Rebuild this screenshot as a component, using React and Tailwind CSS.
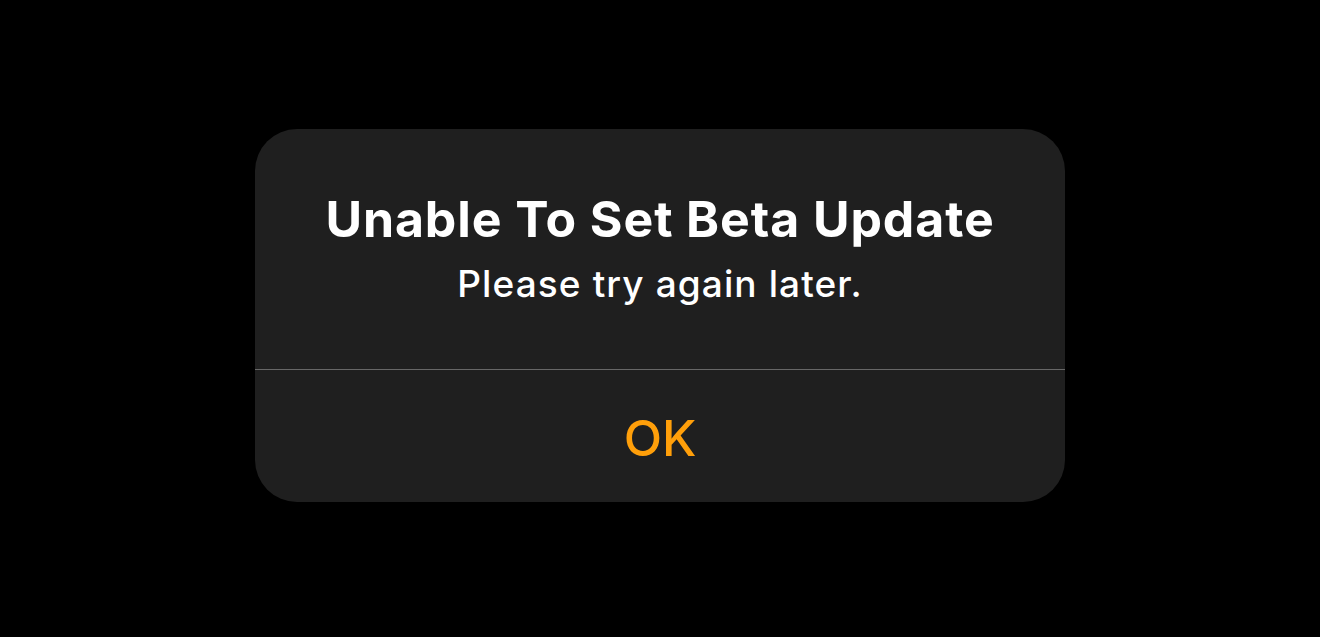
export default function App() {
  return (
    <div className="w-[1320px] h-[637px] bg-black pt-[129px]" style={{ fontFamily: "Inter, 'Noto Sans', sans-serif" }}>
      <div className="mx-auto w-[810px] h-[373px] rounded-[42px] bg-[#1f1f1f] flex flex-col overflow-hidden">
        <div className="h-[240px] flex flex-col items-center pt-[52px]">
          <h1 className="text-white font-bold text-[50px] leading-[76px] tracking-[0.9px] whitespace-nowrap">Unable To Set Beta Update</h1>
          <p className="text-white font-medium text-[37px] leading-[53px] tracking-[1.1px] whitespace-nowrap">Please try again later.</p>
        </div>
        <div className="h-px bg-[#676767]" />
        <div className="flex-1 flex items-center justify-center pt-1">
          <span className="text-[#ff9f0a] font-medium text-[50px] leading-[60px]">OK</span>
        </div>
      </div>
    </div>
  );
}
